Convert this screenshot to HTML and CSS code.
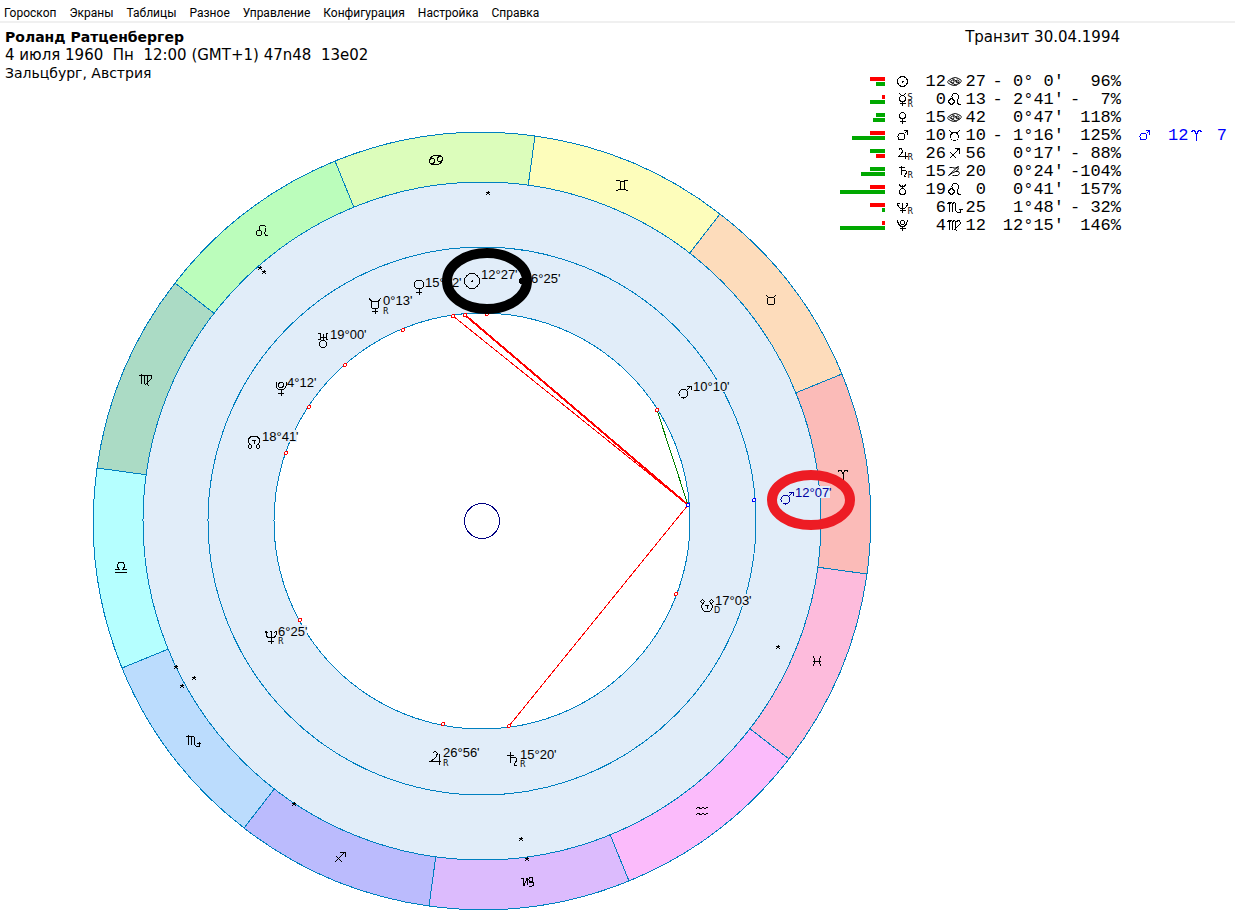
FILE: index.html
```html
<!DOCTYPE html>
<html lang="ru">
<head>
<meta charset="utf-8">
<title>Роланд Ратценбергер</title>
<link rel="stylesheet" href="styles.css">
</head>
<body>
<svg class="defs" width="0" height="0" aria-hidden="true">
  <defs>
    <!-- planets, wheel size -->
    <g id="sun"><circle r="7.5"/><path d="M-1 0H1M0-1V1"/></g>
    <g id="venus"><circle cy="-2.5" r="4.5"/><path d="M0 2V8M-3 5.5H3"/></g>
    <g id="mercury"><circle cy="-1" r="4"/><path d="M-6-8L-3-4M6-8L3-4M0 3V8M-3 5H3"/></g>
    <g id="uranus"><circle cy="4" r="3.5"/><path d="M-5-7H-3V-1H-5M5-7H3V-1H5M-3-3H3M0-6V0"/></g>
    <g id="pluto"><circle cy="-3" r="2.5"/><path d="M-5-6V-2Q-4 2 0 2Q4 2 5-2V-6M0 2V8M-3 5H3"/></g>
    <g id="north"><circle cx="-4" cy="4.500" r="1.7"/><circle cx="4" cy="4.500" r="1.7"/><path d="M-3 3Q-6 1-6-1Q-5-6 0-6Q5-6 6-1Q6 1 3 3M-2-2H2M0-2V2"/></g>
    <g id="south"><circle cx="-4.500" cy="-4.500" r="1.7"/><circle cx="4.500" cy="-4.500" r="1.7"/><path d="M-3-3Q-6-1-5 2Q-4 6 0 6Q4 6 5 2Q6-1 3-3M-2-1H2M0-1V3"/></g>
    <g id="mars"><circle cx="-1.500" cy="1.500" r="4.5"/><path d="M2-2L6-6M2-6H6V-2"/></g>
    <g id="neptune"><path d="M-5-6V-2Q-4 1 0 1Q4 1 5-2V-6M0-6V7M-3 4H3M-6-4L-5-6L-3-4M-1-5L0-6L1-5M3-4L5-6L6-4"/></g>
    <g id="jupiter"><path d="M-3-5Q-1-8 1-5Q2-1-5 3H5M3-4V7"/></g>
    <g id="saturn"><path d="M-6-4H1M-3-7V4M-3 0Q0-3 3-1Q5 1 1 5Q1 8 4 6"/></g>
    <!-- planets, table size -->
    <g id="t-sun"><circle r="5"/><path d="M-1 0H1M0-1V1"/></g>
    <g id="t-mercury"><circle cy="-1" r="3"/><path d="M-3-6Q-2-4 0-4Q2-4 3-6M0 2V6M-3 4H3"/></g>
    <g id="t-venus"><circle cy="-2" r="3"/><path d="M0 1V6M-3 4H3"/></g>
    <g id="t-mars"><circle cx="-1" cy="1" r="3.5"/><path d="M2-2L5-5M1-5H5V-1"/></g>
    <g id="t-jupiter"><path d="M-4-3Q-2-7 0-3Q0 0-4 3H5M3-2V5"/></g>
    <g id="t-saturn"><path d="M-4-4H2M-1-6V3M-1 0Q2-3 4 0Q4 2 2 4Q2 6 4 5"/></g>
    <g id="t-uranus"><circle cy="2" r="3"/><path d="M-3-5L-2-3H2L3-5M0-5V-1"/></g>
    <g id="t-neptune"><path d="M-5-5Q-5 1 0 1Q5 1 5-5M0-5V5M-3 3H3M-5-4H-3M3-4H5"/></g>
    <g id="t-pluto"><circle cy="-3" r="2"/><path d="M-5-5Q-4 1 0 1Q4 1 5-5M0 1V5M-3 3H3"/></g>
    <!-- signs -->
    <g id="aries"><path d="M-5-3L-4-5H-2L0-1V5M0-1L2-5H4L5-3"/></g>
    <g id="taurus"><circle cy="1" r="4"/><path d="M-5-5L-3-3H3L5-5"/></g>
    <g id="gemini"><path d="M-6-5H-4L-2-4H2L4-5H6M-6 5H-4L-2 4H2L4 5H6M-2-4V4M2-4V4"/></g>
    <g id="cancer"><circle cx="-4" cy="1" r="2.500"/><circle cx="4" cy="-1" r="2.500"/><path d="M-6-1Q-4-5 1-5Q4-5 6-3M6 1Q4 5-1 5Q-4 5-6 3"/></g>
    <g id="leo"><circle cx="-3" cy="2" r="2.700"/><path d="M-2-1Q-4-6 1-6Q6-5 3 1Q2 5 6 5"/></g>
    <g id="virgo"><path d="M-7-4L-5-5V4M-5-4L-3-5L-2-4V4M-2-4L0-5L1-4V4L3 6M1-4L5-5L6-2L-1 5"/></g>
    <g id="libra"><path d="M-6 5H6M-6 2H-2L-4-1Q-3-5 0-5Q3-5 4-1L2 2H6"/></g>
    <g id="scorpio"><path d="M-7-4L-5-5V4M-5-4L-3-5L-2-4V4M-2-4L0-5L1-4V3L3 5H6V1M4 2H8"/></g>
    <g id="sagittarius"><path d="M-5 5L5-5M0-5H5V0M-4-1L2 5M3-4L4-3"/></g>
    <g id="capricorn"><circle cx="3" cy="-2.500" r="2"/><path d="M-7-4H-5L-4 4L-1-4V3M1 1Q6-1 6 2Q5 5 1 4"/></g>
    <g id="aquarius"><path d="M-6-2L-4-4L-1-2L1-4L3-2L5-4L6-3M-6 4L-4 2L-1 4L1 2L3 4L5 2L6 3"/></g>
    <g id="pisces"><path d="M-4-5Q0 0-4 5M4-5Q0 0 4 5M-4 0H4"/></g>
    <g id="t-cancer" class="fine"><circle cx="-2" cy="0" r="1.500"/><circle cx="3" cy="0" r="1.500"/><path d="M-7 0L-3-3Q1-5 4-3L7-1M7 0L3 3Q-1 5-4 3L-7 1M-2-3L5 2M-5 0L2 4"/></g>
    <g id="t-capricorn" class="fine"><path d="M-5-4H-2Q0-2 4-5Q-1-1-6 4Q-2 1 1 0Q5-1 5 2Q4 5 0 4H-2M4-4Q4-1 1 0"/></g>
    <g id="star"><path d="M0-2V0M-2-1H2M-2 2L0 0L2 2"/></g>
  </defs>
</svg>

<nav class="menu">
  <button>Гороскоп</button><button>Экраны</button><button>Таблицы</button><button>Разное</button><button>Управление</button><button>Конфигурация</button><button>Настройка</button><button>Справка</button>
</nav>

<main class="sheet">
  <svg class="wheel" viewBox="92 131 780 780" role="img" aria-label="Карта гороскопа">
    <g class="ring" transform="translate(482 521)">
      <path fill="#fbbbb8" d="M0 0L385 53A389 389 0 0 0 360-147Z"/>
      <path fill="#fddcbb" d="M0 0L360-147A389 389 0 0 0 238-307Z"/>
      <path fill="#fdfdbb" d="M0 0L238-307A389 389 0 0 0 53-385Z"/>
      <path fill="#dcfdbb" d="M0 0L53-385A389 389 0 0 0-147-360Z"/>
      <path fill="#bbfdbb" d="M0 0L-147-360A389 389 0 0 0-307-238Z"/>
      <path fill="#abdbc5" d="M0 0L-307-238A389 389 0 0 0-385-53Z"/>
      <path fill="#b5ffff" d="M0 0L-385-53A389 389 0 0 0-360 147Z"/>
      <path fill="#bbdcfd" d="M0 0L-360 147A389 389 0 0 0-238 307Z"/>
      <path fill="#bbbbfd" d="M0 0L-238 307A389 389 0 0 0-53 385Z"/>
      <path fill="#dcbbfd" d="M0 0L-53 385A389 389 0 0 0 147 360Z"/>
      <path fill="#fbbbfb" d="M0 0L147 360A389 389 0 0 0 307 238Z"/>
      <path fill="#fdbbdc" d="M0 0L307 238A389 389 0 0 0 385 53Z"/>
      <circle class="band" r="339"/>
      <circle class="band" r="274"/>
      <circle class="core" r="208"/>
      <circle class="hub" r="17.500"/>
    </g>

    <g class="aspects">
      <path class="hard" d="M453 316L688 505L509 726"/>
      <path class="hard strong" d="M465 315L688 505"/>
      <path class="soft" d="M657 410L688 505"/>
    </g>

    <g class="points">
      <circle cx="453" cy="316" r="1.500"/><circle cx="465" cy="315" r="1.500"/><circle cx="487" cy="314" r="1.500"/>
      <circle cx="403" cy="330" r="1.500"/><circle cx="345" cy="365" r="1.500"/><circle cx="309" cy="407" r="1.500"/>
      <circle cx="286" cy="453" r="1.500"/><circle cx="300" cy="620" r="1.500"/><circle cx="443" cy="724" r="1.500"/>
      <circle cx="509" cy="726" r="1.500"/><circle cx="676" cy="594" r="1.500"/><circle cx="657" cy="410" r="1.500"/>
      <g class="transit"><circle cx="688" cy="505" r="1.500"/><circle cx="754" cy="500" r="1.500"/></g>
    </g>

    <g class="glyph">
      <use href="#aries" x="843" y="475"/><use href="#taurus" x="771" y="300"/><use href="#gemini" x="622" y="185"/>
      <use href="#cancer" x="436" y="160"/><use href="#leo" x="262" y="231"/><use href="#virgo" x="146" y="380"/>
      <use href="#libra" x="121" y="567"/><use href="#scorpio" x="193" y="741"/><use href="#sagittarius" x="340" y="857"/>
      <use href="#capricorn" x="528" y="882"/><use href="#aquarius" x="702" y="811"/><use href="#pisces" x="817" y="661"/>
      <use href="#star" x="488" y="193"/><use href="#star" x="260" y="268"/><use href="#star" x="264" y="272"/>
      <use href="#star" x="176" y="667"/><use href="#star" x="182" y="686"/><use href="#star" x="194" y="678"/>
      <use href="#star" x="294" y="804"/><use href="#star" x="521" y="839"/><use href="#star" x="527" y="859"/><use href="#star" x="778" y="647"/>
    </g>

    <g class="plate">
      <rect x="262" y="430" width="35" height="12"/><rect x="278" y="625" width="29" height="12"/>
      <rect x="693" y="380" width="36" height="12"/><rect x="715" y="594" width="36" height="12"/><rect x="795" y="486" width="35" height="12"/>
    </g>

    <g class="glyph">
      <use href="#sun" x="472" y="281"/><use href="#venus" x="419" y="287"/><use href="#mercury" x="375" y="306"/>
      <use href="#uranus" x="323" y="340"/><use href="#pluto" x="281" y="388"/><use href="#north" x="254" y="442"/>
      <use href="#neptune" x="271" y="637"/><use href="#jupiter" x="436" y="758"/><use href="#saturn" x="513" y="759"/>
      <use href="#south" x="707" y="606"/><use href="#mars" x="685" y="392"/>
      <g class="transit"><use href="#mars" x="787" y="498"/></g>
    </g>

    <g class="degrees">
      <text x="425" y="287">15°42'</text><text x="481" y="279">12°27'</text><text x="531" y="283">6°25'</text>
      <text x="383" y="305">0°13'</text><text x="330" y="339">19°00'</text><text x="287" y="387">4°12'</text>
      <text x="262" y="441">18°41'</text><text x="278" y="636">6°25'</text><text x="443" y="757">26°56'</text>
      <text x="520" y="759">15°20'</text><text x="715" y="605">17°03'</text><text x="693" y="391">10°10'</text>
      <text class="transit" x="795" y="497">12°07'</text>
    </g>
    <g class="mark">
      <text x="383" y="314">R</text><text x="278" y="644">R</text><text x="443" y="766">R</text><text x="520" y="767">R</text><text x="714" y="613">D</text>
    </g>

    <ellipse class="ring-natal" cx="487" cy="281" rx="40" ry="28"/>
    <circle cx="522" cy="281" r="3"/>
    <ellipse class="ring-transit" cx="811" cy="500" rx="39" ry="25"/>
  </svg>

  <header class="person">
    <h1>Роланд Ратценбергер</h1>
    <p class="moment">4 июля 1960  Пн  12:00 (GMT+1) 47n48  13e02</p>
    <p>Зальцбург, Австрия</p>
  </header>

  <table class="positions">
    <caption>Транзит 30.04.1994</caption>
    <colgroup><col class="c-bars"><col class="c-planet"><col class="c-deg"><col class="c-sign"><col class="c-min"><col class="c-decl"><col class="c-pct"><col class="c-tplanet"><col class="c-tdeg"><col class="c-tsign"><col class="c-tmin"></colgroup>
    <tbody>
      <tr><td><i class="bar bad w15"></i><i class="bar good w9"></i></td><td><svg class="icon" viewBox="-17.5 -8.5 36 18"><use href="#t-sun"/></svg></td><td>12</td><td><svg class="sign" viewBox="-8.5 -8.5 18 18"><use href="#t-cancer"/></svg></td><td>27</td><td>- 0° 0'</td><td>96%</td></tr>
      <tr><td><i class="bar bad w3"></i><i class="bar good w15"></i></td><td><svg class="icon" viewBox="-17.5 -8.5 36 18"><use href="#t-mercury"/><text x="5" y="0">S</text><text x="5" y="7">R</text></svg></td><td>0</td><td><svg class="sign" viewBox="-8.5 -8.5 18 18"><use href="#leo"/></svg></td><td>13</td><td>- 2°41'</td><td>-  7%</td></tr>
      <tr><td><i class="bar good w9"></i><i class="bar good w12"></i></td><td><svg class="icon" viewBox="-17.5 -8.5 36 18"><use href="#t-venus"/></svg></td><td>15</td><td><svg class="sign" viewBox="-8.5 -8.5 18 18"><use href="#t-cancer"/></svg></td><td>42</td><td>0°47'</td><td>118%</td></tr>
      <tr><td><i class="bar bad w15"></i><i class="bar good w33"></i></td><td><svg class="icon" viewBox="-17.5 -8.5 36 18"><use href="#t-mars"/></svg></td><td>10</td><td><svg class="sign" viewBox="-8.5 -8.5 18 18"><use href="#taurus"/></svg></td><td>10</td><td>- 1°16'</td><td>125%</td><td class="now"><svg class="icon" viewBox="-17.5 -8.5 36 18"><use href="#t-mars"/></svg></td><td class="now">12</td><td class="now"><svg class="sign" viewBox="-8.5 -8.5 18 18"><use href="#aries"/></svg></td><td class="now">7</td></tr>
      <tr><td><i class="bar good w15"></i><i class="bar bad w9"></i></td><td><svg class="icon" viewBox="-17.5 -8.5 36 18"><use href="#t-jupiter"/><text x="5" y="6">R</text></svg></td><td>26</td><td><svg class="sign" viewBox="-8.5 -8.5 18 18"><use href="#sagittarius"/></svg></td><td>56</td><td>0°17'</td><td>- 88%</td></tr>
      <tr><td><i class="bar good w15"></i><i class="bar good w24"></i></td><td><svg class="icon" viewBox="-17.5 -8.5 36 18"><use href="#t-saturn"/><text x="5" y="6">R</text></svg></td><td>15</td><td><svg class="sign" viewBox="-8.5 -8.5 18 18"><use href="#t-capricorn"/></svg></td><td>20</td><td>0°24'</td><td>-104%</td></tr>
      <tr><td><i class="bar bad w15"></i><i class="bar good w45"></i></td><td><svg class="icon" viewBox="-17.5 -8.5 36 18"><use href="#t-uranus"/></svg></td><td>19</td><td><svg class="sign" viewBox="-8.5 -8.5 18 18"><use href="#leo"/></svg></td><td>0</td><td>0°41'</td><td>157%</td></tr>
      <tr><td><i class="bar bad w15"></i><i class="bar good w3"></i></td><td><svg class="icon" viewBox="-17.5 -8.5 36 18"><use href="#t-neptune"/><text x="5" y="6">R</text></svg></td><td>6</td><td><svg class="sign" viewBox="-8.5 -8.5 18 18"><use href="#scorpio"/></svg></td><td>25</td><td>1°48'</td><td>- 32%</td></tr>
      <tr><td><i class="bar bad w3"></i><i class="bar good w45"></i></td><td><svg class="icon" viewBox="-17.5 -8.5 36 18"><use href="#t-pluto"/></svg></td><td>4</td><td><svg class="sign" viewBox="-8.5 -8.5 18 18"><use href="#virgo"/></svg></td><td>12</td><td>12°15'</td><td>146%</td></tr>
    </tbody>
  </table>
</main>
</body>
</html>
```
FILE: styles.css
```css
body {
  margin: 0;
  background: #fff;
  color: #000;
  font-family: "DejaVu Sans", sans-serif;
}

.defs {
  position: absolute;
}

.menu {
  display: flex;
  gap: 13px;
  padding: 6px 4px 0;
  border-bottom: 2px solid #f0f0f0;
}

.menu button {
  padding: 0;
  border: 0;
  background: none;
  color: inherit;
  font: 12px/15px Roboto, sans-serif;
}

/* the wheel and the captions share one grid cell */
.sheet {
  display: grid;
  grid-template-columns: 1fr;
}

.sheet > * {
  grid-area: 1 / 1;
}

.person {
  justify-self: start;
  align-self: start;
  padding: 5px 5px 0;
}

.person h1,
.person p {
  margin: 0;
  font-size: 14px;
  line-height: 18px;
}

.person .moment {
  font-size: 15px;
  white-space: pre-wrap;
}

.wheel {
  width: 780px;
  max-width: 100%;
  margin: 108px 0 10px 92px;
}

.wheel,
.icon,
.sign {
  display: block;
  shape-rendering: crispEdges;
}

.fine {
  shape-rendering: auto;
}

.ring {
  stroke: #0080c0;
}

.band {
  fill: #e1edf9;
}

.core {
  fill: #fff;
}

.hub {
  fill: none;
  stroke: #000080;
}

.aspects {
  fill: none;
}

.hard {
  stroke: #f00;
}

.strong {
  stroke-width: 2px;
}

.soft {
  stroke: #008000;
}

.points {
  fill: #fff;
  stroke: #f00;
}

.points .transit {
  stroke: #00f;
}

.glyph,
.icon,
.sign {
  fill: none;
  stroke: currentColor;
}

.glyph .transit {
  stroke: #0000a0;
}

.plate {
  fill: #e1edf9;
}

.degrees {
  font: 13px "Liberation Sans", sans-serif;
}

.degrees .transit {
  fill: #0000a0;
}

.mark,
.icon text {
  fill: currentColor;
  stroke: none;
  font: 8px "DejaVu Sans", sans-serif;
}

.ring-natal,
.ring-transit {
  fill: none;
  stroke: #000;
  stroke-width: 10px;
  shape-rendering: auto;
}

.ring-transit {
  stroke: #ed1c24;
}

.positions {
  justify-self: end;
  align-self: start;
  width: 387px;
  margin: 5px 8px 0 0;
  border-collapse: collapse;
  table-layout: fixed;
  font: 17px/18px "Liberation Mono", monospace;
}

.positions caption {
  padding: 0 107px 27px 0;
  text-align: right;
  font: 15px/18px "DejaVu Sans", sans-serif;
}

.positions td {
  height: 18px;
  padding: 0;
  text-align: right;
  white-space: pre;
}

.c-bars { width: 45px; }
.c-planet { width: 36px; }
.c-deg { width: 25px; }
.c-sign { width: 19px; }
.c-min { width: 21px; }
.c-decl { width: 78px; }
.c-pct { width: 57px; }
.c-tplanet { width: 47px; }
.c-tdeg { width: 20px; }
.c-tsign { width: 17px; }
.c-tmin { width: 22px; }

.icon {
  width: 36px;
  height: 18px;
  margin: 0 auto;
}

.sign {
  width: 18px;
  height: 18px;
}

.now {
  color: #00f;
}

.bar {
  display: block;
  height: 4px;
  margin: 0 0 1px auto;
}

.good { background: #00a800; }
.bad { background: #f00; }

.w3 { width: 3px; }
.w9 { width: 9px; }
.w12 { width: 12px; }
.w15 { width: 15px; }
.w24 { width: 24px; }
.w33 { width: 33px; }
.w45 { width: 45px; }
```
